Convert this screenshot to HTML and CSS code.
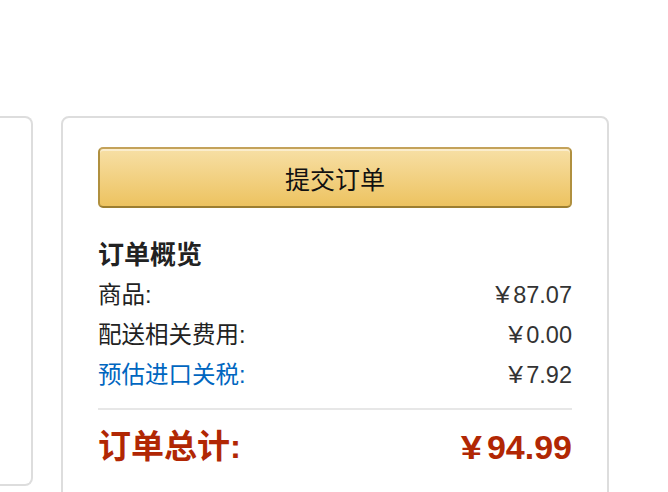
FILE: index.html
```html
<!DOCTYPE html>
<html lang="zh-CN">
<head>
  <meta charset="UTF-8">
  <meta name="viewport" content="width=device-width, initial-scale=1.0">
  <title>订单概览</title>
  <link rel="stylesheet" href="styles.css">
</head>
<body>
  <div class="checkout">
    <div class="box side-box"></div>

    <div class="box summary">
      <button class="place-order">提交订单</button>

      <h3 class="summary-title">订单概览</h3>
      <div class="line">
        <span>商品:</span>
        <span class="amount"><span class="currency">¥</span>87.07</span>
      </div>
      <div class="line">
        <span>配送相关费用:</span>
        <span class="amount"><span class="currency">¥</span>0.00</span>
      </div>
      <div class="line">
        <a class="link" href="#">预估进口关税:</a>
        <span class="amount"><span class="currency">¥</span>7.92</span>
      </div>

      <div class="line total">
        <span>订单总计:</span>
        <span class="amount"><span class="currency">¥</span>94.99</span>
      </div>
    </div>
  </div>
</body>
</html>
```

FILE: styles.css
```css
body {
  margin: 0;
  font-family: "Liberation Sans", Arial, "Noto Sans CJK SC", sans-serif;
  color: #222;
  background-color: #fff;
}
.checkout {
  display: flex;
  align-items: flex-start;
  gap: 28px;
  padding-top: 116px;
}
.box {
  border: 2px solid #ddd;
  border-radius: 8px;
  box-sizing: border-box;
}
.side-box {
  width: 33px;
  height: 370px;
  border-left: none;
  border-radius: 0 8px 8px 0;
}
.summary {
  width: 548px;
  min-height: 420px;
  padding: 29px 35px;
}
.place-order {
  display: block;
  width: 100%;
  height: 61px;
  font-family: "Liberation Sans", Arial, "Noto Sans CJK SC", sans-serif;
  font-size: 25px;
  color: #111;
  border: 2px solid;
  border-color: #c4a25a #b0903f #9c7e31;
  border-radius: 5px;
  background: linear-gradient(to bottom, #f7dfa5, #edc360);
  box-shadow: inset 0 2px 0 rgba(255, 255, 255, 0.45);
  cursor: pointer;
}
.summary-title {
  margin: 27px 0 0;
  font-size: 26px;
  line-height: 40px;
  font-weight: bold;
  color: #222;
}
.line {
  display: flex;
  justify-content: space-between;
  font-size: 23.5px;
  line-height: 40px;
}
.line .amount {
  color: #333;
}
.currency {
  display: inline-block;
  margin-right: 4px;
  transform: scaleX(1.12);
}
.link {
  color: #0066c0;
  text-decoration: none;
}
.total {
  margin-top: 13px;
  border-top: 2px solid #e7e7e7;
  padding-top: 17px;
  font-size: 33px;
  font-weight: bold;
  color: #b12704;
}
.total .amount {
  color: #b12704;
  font-size: 34px;
}
.total .currency {
  margin-right: 6px;
}
```
